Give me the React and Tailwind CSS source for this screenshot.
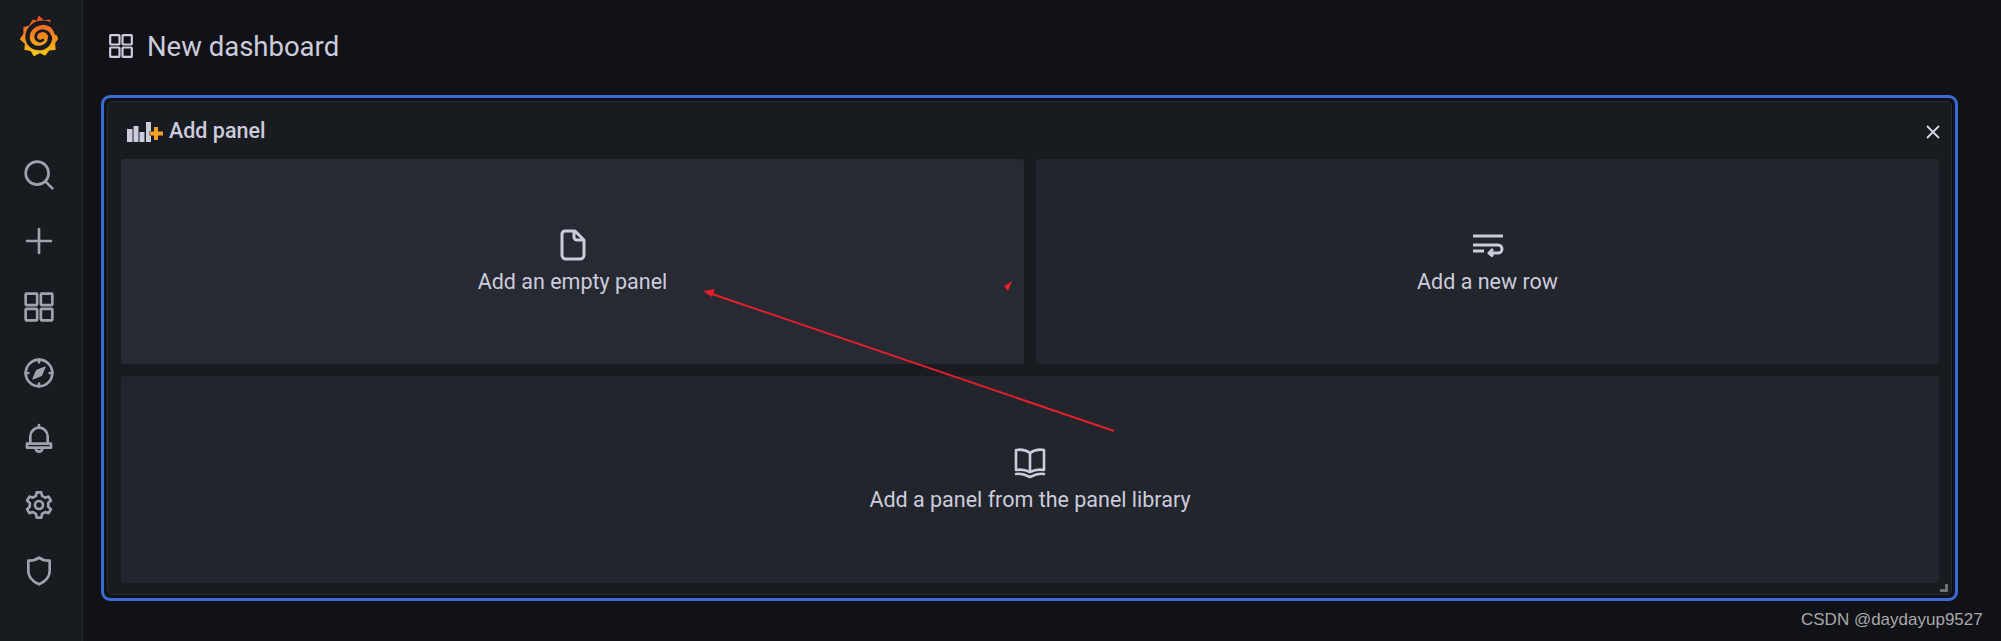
import React from 'react';

const stroke = { fill: 'none', stroke: 'currentColor', strokeWidth: 2, strokeLinecap: 'round', strokeLinejoin: 'round' };

function Logo() {
  return (
    <svg width="40" height="42" viewBox="0 0 40 42">
      <defs>
        <linearGradient id="gf" x1="0" y1="0" x2="0" y2="1">
          <stop offset="0" stopColor="#ee4f27" />
          <stop offset="0.5" stopColor="#f6871f" />
          <stop offset="1" stopColor="#fcca0e" />
        </linearGradient>
      </defs>
      <path
        fill="url(#gf)"
        stroke="url(#gf)"
        strokeWidth="1.2"
        strokeLinejoin="round"
        d="M20 1.5 L24.5 6 L30.5 5 L32.5 10.5 L37 13 L36.5 18 L38.5 24 L35.5 28 L36 34.5 L30 35 L26 40 L21 37.5 L15 40.5 L12 35.5 L6 34.5 L6.5 28.5 L1.5 24 L5 19 L5 12.5 L10.5 11 L14 5 L18 6.5 Z"
      />
      <path d="M37.5 18 C35.5 10 28 6.5 21 8 C13.5 9.5 8.5 15 8.5 22 C8.5 29 14.5 33.5 21 33 C27 32.5 31 28 31 22.5" fill="none" stroke="#181b1f" strokeWidth="4.4" strokeLinecap="round" />
      <path d="M31 22.5 C30.5 17.5 26 15 22 15.8 C18 16.6 16 20 17 23.5 C18 26 21.5 27 24 25" fill="none" stroke="#181b1f" strokeWidth="2.8" strokeLinecap="round" />
    </svg>
  );
}

function NavIcon({ children }) {
  return (
    <div className="h-[66px] flex items-center justify-center pr-[4px] text-[#9fa4ac]">
      <svg width="32" height="32" viewBox="0 0 24 24" {...stroke}>{children}</svg>
    </div>
  );
}

function AppsIcon({ size, className }) {
  return (
    <svg width={size} height={size} viewBox="0 0 24 24" className={className} fill="none" stroke="currentColor" strokeWidth="2" strokeLinejoin="round">
      <rect x="2" y="2" width="8.6" height="8.6" rx="0.6" />
      <rect x="13.4" y="2" width="8.6" height="8.6" rx="0.6" />
      <rect x="2" y="13.4" width="8.6" height="8.6" rx="0.6" />
      <rect x="13.4" y="13.4" width="8.6" height="8.6" rx="0.6" />
    </svg>
  );
}

function Sidebar() {
  return (
    <aside className="w-[83px] shrink-0 h-full bg-[#181b1f] border-r border-[#25282d] flex flex-col">
      <div className="h-[142px] pt-[15px] pl-[19px]">
        <Logo />
      </div>
      <NavIcon>
        <circle cx="10.6" cy="10.6" r="8.6" />
        <path d="M17 17 L22 22" />
      </NavIcon>
      <NavIcon>
        <path d="M3 12 H21 M12 3 V21" />
      </NavIcon>
      <div className="h-[66px] flex items-center justify-center pr-[4px] text-[#9fa4ac]">
        <AppsIcon size={32} />
      </div>
      <NavIcon>
        <circle cx="12" cy="12" r="10" />
        <path d="M12 2 V4 M12 20 V22 M2 12 H4 M20 12 H22" />
        <path d="M16.5 7.5 L13.8 13.8 L7.5 16.5 L10.2 10.2 Z" fill="currentColor" strokeWidth="1" />
      </NavIcon>
      <NavIcon>
        <path d="M5.5 15 V10 A6.5 6.5 0 0 1 18.5 10 V15" />
        <path d="M3 15.5 H21 V18.5 H3 Z" />
        <path d="M12 1.5 V3.5 M9.5 19 A2.5 2.5 0 0 0 14.5 19" />
      </NavIcon>
      <NavIcon>
        <circle cx="12" cy="12" r="3" />
        <path d="M10.3 2.5 H13.7 L14.3 5.2 L16.6 6.5 L19.2 5.7 L20.9 8.6 L18.9 10.5 V13.2 L20.9 15.2 L19.2 18.1 L16.6 17.3 L14.3 18.7 L13.7 21.5 H10.3 L9.7 18.7 L7.4 17.3 L4.8 18.1 L3.1 15.2 L5.1 13.2 V10.5 L3.1 8.6 L4.8 5.7 L7.4 6.5 L9.7 5.2 Z" />
      </NavIcon>
      <NavIcon>
        <path d="M12 2 C14.5 3.8 17 4.4 20 4.2 V12 C20 16.5 16.5 20 12 22 C7.5 20 4 16.5 4 12 V4.2 C7 4.4 9.5 3.8 12 2 Z" />
      </NavIcon>
    </aside>
  );
}

function AddPanelIcon() {
  return (
    <svg width="36" height="20" viewBox="0 0 36 20" className="shrink-0">
      <g fill="#ccccdc">
        <rect x="0" y="7" width="5.5" height="13" />
        <rect x="6.5" y="4" width="5" height="16" />
        <rect x="12.5" y="10" width="5" height="10" />
        <rect x="19" y="0" width="5" height="20" />
      </g>
      <path d="M27 5 H31 V9.5 H36 V13.5 H31 V18 H27 V13.5 H23 V9.5 H27 Z" fill="#f5a127" stroke="#181b1f" strokeWidth="1" paintOrder="stroke" />
    </svg>
  );
}

function Tile({ bg, label, children }) {
  return (
    <div className={`flex-1 min-w-0 rounded-[3px] flex flex-col items-center justify-center pt-[4px] text-[#ccccdc] ${bg}`}>
      <div className="h-[32px] flex items-center justify-center mb-[7px]">{children}</div>
      <div className="text-[21.5px] leading-[28px] mb-[2px]">{label}</div>
    </div>
  );
}

export default function App() {
  return (
    <div className="relative w-[2001px] h-[641px] overflow-hidden flex bg-[#111217] font-['Roboto',sans-serif]">
      <Sidebar />
      <main className="flex-1 min-w-0 flex flex-col pl-[18px] pr-[43px]">
        <header className="h-[95px] shrink-0 flex items-start pt-[30px] pl-[7px] text-[#ccccdc]">
          <AppsIcon size={26} className="mt-[3px]" />
          <h1 className="ml-[13px] text-[27.5px] leading-[34px] font-normal">New dashboard</h1>
        </header>
        <section className="relative h-[506px] rounded-[9px] border-[3px] border-[#3a6bd0] p-[3px]">
          <div className="h-full rounded-[5px] border border-[#292c31] bg-[#181b1f] flex flex-col pl-[13px] pr-[12px] pb-[11px]">
            <div className="h-[57px] shrink-0 flex items-center pl-[6px] pt-[2px] text-[#ccccdc]">
              <AddPanelIcon />
              <span className="ml-[6px] text-[21.5px] font-medium">Add panel</span>
              <svg className="ml-auto mr-[-1px]" width="14" height="14" viewBox="0 0 14 14" fill="none" stroke="#d8d8e4" strokeWidth="1.8">
                <path d="M1 1 L13 13 M13 1 L1 13" />
              </svg>
            </div>
            <div className="flex-1 min-h-0 flex flex-col gap-[12px]">
              <div className="h-[205px] shrink-0 flex gap-[12px]">
                <Tile bg="bg-[#272a32]" label="Add an empty panel">
                  <svg width="26" height="32" viewBox="0 0 26 32" fill="none" stroke="#ccccdc" strokeWidth="3" strokeLinejoin="round">
                    <path d="M5 2 H15 L24 11 V26 A4 4 0 0 1 20 30 H6 A4 4 0 0 1 2 26 V5 A3 3 0 0 1 5 2 Z" />
                    <path d="M14 2 V8 A3 3 0 0 0 17 11 H24" />
                  </svg>
                </Tile>
                <Tile bg="bg-[#22252b]" label="Add a new row">
                  <svg width="32" height="24" viewBox="0 0 32 24" fill="none" stroke="#ccccdc" strokeWidth="3" strokeLinejoin="round">
                    <path d="M1 3 H31 M1 12 H26 A4 4 0 0 1 26 20 H17 M1 18 H12" />
                    <path d="M21 16 L17 20 L21 23.5" />
                  </svg>
                </Tile>
              </div>
              <div className="flex-1 min-h-0 flex">
                <Tile bg="bg-[#22252b]" label="Add a panel from the panel library">
                  <svg width="32" height="32" viewBox="0 0 32 32" fill="none" stroke="#ccccdc" strokeWidth="2.6" strokeLinejoin="round">
                    <path d="M2 3 C7 2 12 3 16 6 C20 3 25 2 30 3 V23 C25 22 20 23 16 25 C12 23 7 22 2 23 Z" />
                    <path d="M16 6 V25" />
                    <path d="M2 27 C8 26 12 28 16 30 C20 28 24 26 30 27" strokeLinecap="round" />
                  </svg>
                </Tile>
              </div>
            </div>
          </div>
          <div className="absolute right-[7px] bottom-[6px] w-[8px] h-[8px] border-r-[3px] border-b-[3px] border-[#6e7176]" />
        </section>
      </main>

      {/* red annotation drawn over the screenshot */}
      <svg className="absolute left-0 top-0 pointer-events-none" width="2001" height="641" viewBox="0 0 2001 641">
        <path d="M1114 431 L712 294" stroke="#e3202c" strokeWidth="2" fill="none" />
        <path d="M703 291 L715 289 L712 297 Z" fill="#e3202c" />
        <path d="M1012 281 L1004 286 L1008 291 Z" fill="#e3202c" />
      </svg>
      <div className="absolute left-[1801px] top-[609px] text-[17px] leading-[22px] text-[#a8a8a8] font-['Liberation_Sans',sans-serif]">CSDN @daydayup9527</div>
    </div>
  );
}
